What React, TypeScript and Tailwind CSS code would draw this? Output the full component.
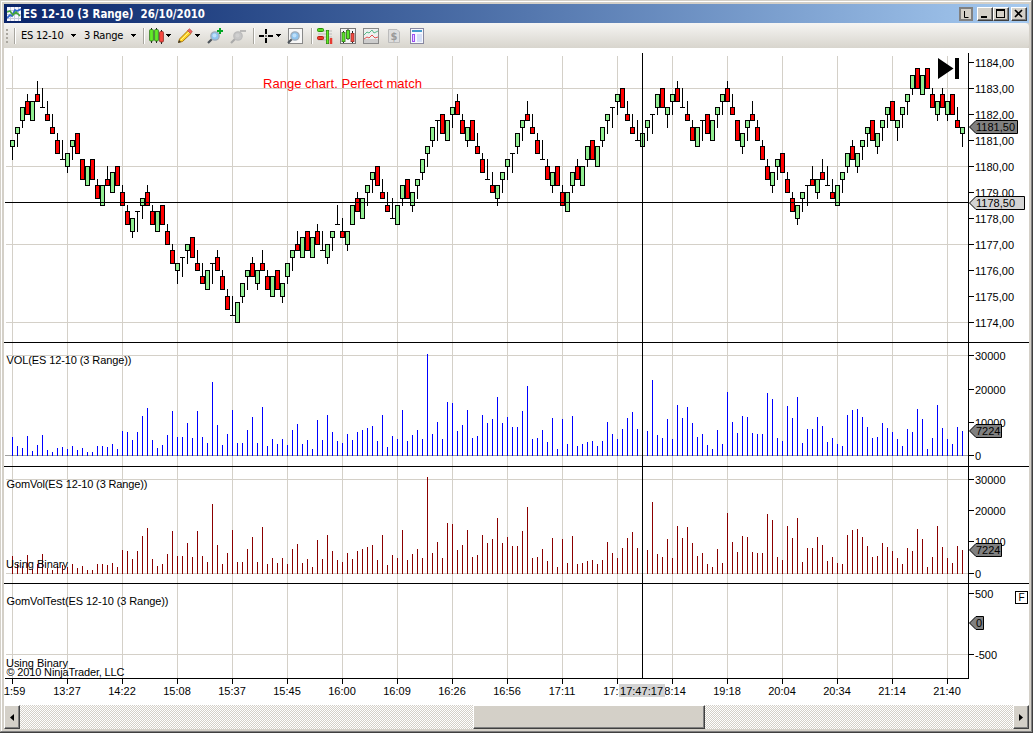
import React from "react";

// Each entry is direction + closing tick + body size in ticks; every bar spans three ticks.
const BARS = `U28,1 U30,1 U33,2 D32,2 U34,3 D34,1 D33,0 D31,1 D29,1 D26,2
D25,0 U26,2 U28,1 D26,3 D22,3 U24,3 D22,3 D19,2 U21,3 D21,1
U23,3 D21,3 D18,2 D15,2 U16,2 U17,0 U19,1 D18,2 D15,2 U17,3
D15,3 D12,2 D9,2 U9,1 U10,0 U12,1 D10,3 D8,1 D6,1 U8,3
U9,0 D8,2 D5,2 D2,2 D1,0 U3,3 U6,2 U8,1 D7,2 U8,2
D8,1 D5,2 U7,3 D5,3 U6,2 U9,2 U11,1 D11,1 U13,3 D11,3
U13,3 D12,2 D11,0 U12,2 U14,1 D15,0 D13,1 U14,2 U18,3 D17,2
U19,3 U21,1 U23,1 D21,3 D19,1 D17,1 D16,0 U18,3 U21,2 D19,3
U20,2 U22,1 U25,2 U27,1 U30,2 U31,0 D29,3 U31,3 U33,1 D32,2
D29,2 U30,2 D28,3 D26,1 D23,2 D22,0 D20,1 U21,2 U23,1 U25,1
U26,0 U29,2 U31,1 D31,1 D29,1 D26,2 D25,0 D22,2 U23,2 D21,3
D18,2 U20,3 U23,2 D22,2 U24,3 U27,2 D25,3 U27,3 U30,2 U32,1
U33,0 U35,1 D33,3 D31,1 D29,1 D28,0 U29,2 U31,1 U32,0 U35,2
D33,3 U33,1 U35,1 D34,2 D33,0 D31,1 D28,2 U30,3 U31,0 D29,3
U31,3 U33,1 U35,1 D34,2 D32,1 D28,3 U29,2 U31,1 D31,1 D28,2
D25,2 D22,2 U23,2 U25,1 D23,3 D20,2 D17,2 U18,2 U20,1 U21,0
D21,1 U22,2 D22,1 D21,0 D19,1 U21,3 U23,1 U26,2 D25,2 U26,2
U28,1 U30,1 D28,3 U29,2 U31,1 U33,1 D31,3 U31,1 U33,1 U35,1
U38,2 D36,3 U38,3 D36,3 D33,2 U34,2 D33,2 U34,2 D32,3 D30,1
U30,1`.split(/\s+/);

const VOLUME = [
  19, 10, 8, 20, 5, 11, 21, 6, 4, 8, 9, 7, 10, 6, 8, 4, 4, 10, 10, 9,
  12, 7, 25, 24, 16, 24, 40, 48, 16, 8, 11, 21, 45, 19, 19, 33, 18, 45, 19, 13,
  74, 31, 11, 22, 46, 13, 13, 26, 39, 13, 49, 10, 17, 12, 17, 11, 26, 32, 12, 16,
  7, 36, 16, 41, 24, 15, 13, 22, 16, 24, 26, 28, 30, 15, 41, 9, 20, 17, 46, 15,
  21, 26, 17, 102, 22, 34, 17, 54, 53, 25, 31, 46, 18, 20, 41, 33, 37, 59, 33, 39,
  29, 29, 45, 70, 17, 18, 26, 14, 38, 7, 37, 12, 40, 10, 12, 14, 15, 10, 15, 34,
  22, 17, 27, 38, 44, 27, 20, 25, 76, 21, 18, 37, 17, 51, 38, 49, 33, 19, 22, 11,
  7, 26, 12, 64, 34, 23, 40, 39, 23, 22, 22, 63, 57, 18, 15, 50, 38, 59, 13, 27,
  27, 39, 30, 14, 18, 12, 10, 41, 46, 47, 39, 29, 18, 19, 33, 28, 24, 17, 10, 27,
  24, 47, 37, 7, 18, 51, 28, 17, 12, 29, 25,
];

const TIMES = ["11:59", "13:27", "14:22", "15:08", "15:37", "15:45", "16:00", "16:09", "16:26", "16:56", "17:11", "17:31", "18:14", "19:18", "20:04", "20:34", "21:14", "21:40"];
const PRICES = [1184, 1183, 1182, 1181, 1180, 1179, 1178, 1177, 1176, 1175, 1174];

const barX = (i: number) => 12 + 5 * i;
const tickY = (t: number) => Math.floor(322 - 6.5 * t);

function Candle({ code, i }: { code: string; i: number }) {
  const up = code[0] === "U";
  const [close, size] = code.slice(1).split(",").map(Number);
  const high = up ? close : close + 3;
  const open = up ? close - size : close + size;
  const top = tickY(Math.max(open, close));
  const bottom = tickY(Math.min(open, close));
  const x = barX(i);
  const wickTop = tickY(high);
  return (
    <g>
      <rect x={x} y={wickTop} width={1} height={tickY(high - 3) - wickTop + 1} />
      <rect x={x - 2} y={top} width={5} height={bottom - top + 1} />
      {size > 0 && <rect x={x - 1} y={top + 1} width={3} height={bottom - top - 1} fill={up ? "#90ee90" : "#ff0000"} />}
    </g>
  );
}

function AxisTick({ y, label, width }: { y: number; label: string; width?: number }) {
  return (
    <g>
      <rect x={968} y={y} width={6} height={1} />
      <text x={975} y={y + 5} textLength={width}>{label}</text>
    </g>
  );
}

function Tag({ y, right, fill, label, width }: { y: number; right: number; fill: string; label: string; width?: number }) {
  return (
    <g>
      <path d={`M969.5 ${y + 7}L976 ${y + 0.5}H${right - 0.5}V${y + 13.5}H976Z`} fill={fill} stroke="#000" />
      <text x={976} y={y + 11} textLength={width}>{label}</text>
    </g>
  );
}

function Chart() {
  return (
    <svg className="block h-[657px] w-[1025px] shrink-0 bg-white font-['Liberation_Sans',Arial,sans-serif] text-[11px]" viewBox="4 48 1025 657">
      <g shapeRendering="crispEdges">
        <g fill="#d4d0c8">
          {TIMES.map((t, i) => <rect key={t} x={12 + 55 * i} y={56} width={1} height={622} />)}
          {[88, 166, 244, 322, 355, 479, 573, 654].map((y) => <rect key={y} x={6} y={y} width={962} height={1} />)}
        </g>
        <rect x={5} y={455} width={963} height={1} fill="#a0a0a0" />
        {VOLUME.map((h, i) => <rect key={i} x={barX(i)} y={456 - h} width={1} height={h} fill="#0000ff" />)}
        {VOLUME.map((v, i) => {
          const h = Math.round(v * 0.95);
          return <rect key={i} x={barX(i)} y={574 - h} width={1} height={h} fill="#8b0000" />;
        })}
        {BARS.map((code, i) => <Candle key={i} code={code} i={i} />)}
        <rect x={4} y={342} width={1025} height={1} />
        <rect x={4} y={466} width={1025} height={1} />
        <rect x={4} y={583} width={1025} height={1} />
        <rect x={5} y={678} width={964} height={1} />
        <rect x={968} y={53} width={1} height={626} />
        <rect x={5} y={202} width={964} height={1} />
        <rect x={642} y={53} width={1} height={626} />
        {TIMES.map((t, i) => <rect key={t} x={12 + 55 * i} y={678} width={1} height={6} />)}
      </g>
      {PRICES.map((p) => <AxisTick key={p} y={62 + (1184 - p) * 26} label={`${p},00`} width={39} />)}
      <AxisTick y={355} label="30000" />
      <AxisTick y={389} label="20000" />
      <AxisTick y={422} label="10000" />
      <AxisTick y={455} label="0" />
      <AxisTick y={479} label="30000" />
      <AxisTick y={510} label="20000" />
      <AxisTick y={541} label="10000" />
      <AxisTick y={573} label="0" />
      <AxisTick y={593} label="500" />
      <AxisTick y={654} label="-500" />
      <Tag y={120} right={1018} fill="#808080" label="1181,50" width={39} />
      <Tag y={196} right={1025} fill="#d3d3d3" label="1178,50" width={39} />
      <Tag y={424} right={1002} fill="#808080" label="7224" />
      <Tag y={543} right={1002} fill="#808080" label="7224" />
      <Tag y={616} right={984} fill="#808080" label="0" />
      {TIMES.map((t, i) => <text key={t} x={12 + 55 * i} y={695} textAnchor="middle">{t}</text>)}
      <rect x={619} y={684} width={46} height={13} fill="#d3d3d3" />
      <text x={620} y={695} textLength={43}>17:47:17</text>
      <text x={263} y={88} className="text-[13px]" fill="#ff0000" textLength={159}>Range chart. Perfect match</text>
      <text x={6.5} y={364} textLength={125}>VOL(ES 12-10 (3 Range))</text>
      <text x={6.5} y={488} textLength={141}>GomVol(ES 12-10 (3 Range))</text>
      <text x={6} y={568} textLength={62}>Using Binary</text>
      <text x={6.5} y={605} textLength={162}>GomVolTest(ES 12-10 (3 Range))</text>
      <text x={6} y={667} textLength={62}>Using Binary</text>
      <text x={6.5} y={676} textLength={118}>© 2010 NinjaTrader, LLC</text>
      <path d="M938 58L953.5 68.5L938 79Z M955 58H959V79H955Z" />
      <rect x={1015.5} y={591.5} width={12} height={12} fill="#fff" stroke="#000" />
      <text x={1018.5} y={601} className="text-[10px]">F</text>
    </svg>
  );
}

const Sep = ({ className }: { className: string }) => <div className={`h-4 w-0.5 shrink-0 border-r border-white bg-[#a8a69f] ${className}`} />;

const Arrow = ({ className }: { className: string }) => (
  <svg className={`h-[3px] w-[5px] shrink-0 ${className}`} viewBox="0 0 5 3" shapeRendering="crispEdges">
    <path d="M0 0H5V1H4V2H3V3H2V2H1V1H0Z" />
  </svg>
);

const Icon = ({ className, children }: { className: string; children: React.ReactNode }) => (
  <svg className={`size-4 shrink-0 ${className}`} viewBox="0 0 16 16">{children}</svg>
);

const Lens = ({ gray }: { gray?: boolean }) => (
  <g>
    <path d="M1 15L5 11" stroke={gray ? "#aaa" : "#4c535a"} strokeWidth="2.2" />
    <circle cx="8" cy="8" r="4.2" fill={gray ? "#c6c6c6" : "#8fc4ee"} stroke={gray ? "#bcbcbc" : "#a0acb8"} strokeWidth="1.3" />
    <circle cx="7.5" cy="7.5" r="2" fill={gray ? "#d0d0d0" : "#bfe0fa"} />
  </g>
);

function Toolbar() {
  return (
    <div className="flex h-[25px] shrink-0 items-center overflow-hidden rounded-r-sm bg-linear-to-b from-[#f6f5f3] to-[#d8d5cd] font-['DejaVu_Sans_Condensed','DejaVu_Sans',sans-serif] text-[11px] tracking-[-0.25px] text-black">
      <div className="ml-[2px] flex flex-col gap-[2px]">
        {[0, 1, 2, 3].map((n) => <div key={n} className="size-[2px] bg-[#aaa79f]" />)}
      </div>
      <Sep className="ml-[6px]" />
      <div className="ml-[5px] w-[50px] pt-[2px] whitespace-nowrap">ES 12-10</div>
      <Arrow className="" />
      <div className="ml-[8px] w-[47px] pt-[2px] whitespace-nowrap">3 Range</div>
      <Arrow className="" />
      <Sep className="ml-[7px]" />
      <Icon className="ml-[4px]">
        <path d="M2.5 0V15M7.5 0V15M12.5 2V16" stroke="#222" />
        <g strokeWidth=".8">
          <rect x=".6" y="1.5" width="3.8" height="11.5" rx="1" fill="#62ec28" stroke="#2b6d16" />
          <rect x="5.6" y="1.5" width="3.8" height="11.5" rx="1" fill="#62ec28" stroke="#2b6d16" />
          <rect x="10.6" y="3.5" width="3.8" height="10.5" rx="1" fill="#fa4a42" stroke="#8a2620" />
        </g>
      </Icon>
      <Arrow className="ml-[1px]" />
      <Icon className="ml-[6px]">
        <path d="M1.5 14.5L2.5 11L11 2.5L14 5.5L5.5 13.5Z" fill="#ffd326" stroke="#a87510" />
        <path d="M4 12L12 4" stroke="#fff390" />
        <path d="M10.5 2.5L12.5 .8L15.3 3.5L13.5 5.5Z" fill="#ee6662" stroke="#b94845" strokeWidth=".7" />
        <path d="M1 15L2 12L4 14Z" fill="#333" />
      </Icon>
      <Arrow className="ml-[2px]" />
      <Icon className="ml-[7px]"><Lens /><path d="M13 0V6M10 3H16" stroke="#00a723" strokeWidth="2" /></Icon>
      <Icon className="ml-[7px]"><Lens gray /><path d="M10 3H16" stroke="#aaa" strokeWidth="1.5" /></Icon>
      <Sep className="ml-[7px]" />
      <Icon className="ml-[4px]"><path d="M0 8H5M9 8H14M7 1V6M7 10V15" stroke="#000" strokeWidth="2" /><path d="M6 8H8" stroke="#000" /></Icon>
      <Arrow className="ml-[1px]" />
      <Icon className="ml-[6px]"><rect x="1.5" y=".5" width="14" height="15" fill="#f7f7f7" stroke="#888" /><Lens /></Icon>
      <Sep className="ml-[8px]" />
      <Icon className="ml-[4px]">
        <path d="M1 3H15M1 6H15M1 9H15M1 12H15" stroke="#bbb" />
        <rect x=".5" y=".5" width="6" height="3" rx="1" fill="#55db20" stroke="#279009" />
        <rect x=".5" y="8.5" width="6" height="3" rx="1" fill="#ec3a2c" stroke="#b51c10" />
        <path d="M10.5 2V16" stroke="#2c6f18" strokeWidth="3" /><path d="M10.5 2.5V15.5" stroke="#62ec28" strokeWidth="1.8" />
        <path d="M14 10V16" stroke="#e53b32" strokeWidth="2.5" />
      </Icon>
      <Icon className="ml-[7px]">
        <rect x=".5" y=".5" width="15" height="15" fill="#f5f5f5" stroke="#777" />
        <path d="M3.5 3V15M8 1V12M12.5 3V15" stroke="#222" />
        <path d="M3.5 4V14M8 2V11" stroke="#285c18" strokeWidth="3.8" /><path d="M3.5 4.5V13.5M8 2.5V10.5" stroke="#5be428" strokeWidth="2.4" />
        <path d="M12.5 5V14" stroke="#7c2822" strokeWidth="3.8" /><path d="M12.5 5.5V13.5" stroke="#f44a42" strokeWidth="2.4" />
      </Icon>
      <Icon className="ml-[7px]">
        <rect x=".5" y=".5" width="15" height="15" fill="#edf0f0" stroke="#888" /><path d="M1 13H15" stroke="#ccc" strokeWidth="4" />
        <path d="M1 7L4 4L6 5L9 2L11 5L15 3" fill="none" stroke="#58b889" /><path d="M1 11L4 9L6 10L9 7L12 10L15 9" fill="none" stroke="#e65353" />
      </Icon>
      <Icon className="ml-[8px]">
        <path d="M1.5 1.5H10L12.5 4V14.5H1.5Z" fill="#ddd" stroke="#bbb" />
        <text x="3.6" y="12" fontSize="11" fontWeight="bold" fill="#999">$</text>
      </Icon>
      <Icon className="ml-[6px]">
        <rect x="1.5" y=".5" width="13" height="15" fill="#f7f8ff" stroke="#8888a0" />
        <path d="M3 3H13" stroke="#449acb" strokeWidth="2" /><rect x="3.5" y="6.5" width="2" height="7" fill="#e8d9ff" stroke="#9b50f1" />
        <path d="M8 7H13M8 9H13M8 11H13M8 13H13" stroke="#b5c7ef" />
      </Icon>
    </div>
  );
}

const BEVEL = "shrink-0 border border-t-white border-l-white border-r-[#404040] border-b-[#404040] bg-[#d4d0c8] shadow-[inset_-1px_-1px_#808080]";

function TitleBar() {
  return (
    <div className="flex h-[19px] shrink-0 items-center bg-linear-to-r from-[#0a246a] to-[#a6caf0]">
      <svg className="ml-[3px] size-[14px] shrink-0" viewBox="0 0 14 14">
        <rect width="14" height="14" fill="#f7f7ff" />
        <path d="M3.5 0V14M7.5 0V14M11.5 0V14M0 3.5H14M0 7.5H14M0 11.5H14" stroke="#c5c9dc" />
        <path d="M0 11L3 8L5 9L8 3L10 4L14 2" fill="none" stroke="#3068ce" strokeWidth="1.8" />
        <path d="M0 5L3 4L6 8L9 5L13 9" fill="none" stroke="#42a43b" strokeWidth="1.6" />
      </svg>
      <svg className="ml-[2px] h-[18px] w-[184px] shrink-0 font-['DejaVu_Sans_Condensed','DejaVu_Sans',sans-serif] text-[12px] font-bold" viewBox="0 0 184 18">
        <text x="0" y="13" fill="#fff" textLength="182" lengthAdjust="spacingAndGlyphs" xmlSpace="preserve">{"ES 12-10 (3 Range)\u00a0 26/10/2010"}</text>
      </svg>
      <div className="ml-auto flex h-[14px] pr-[2px]">
        <svg className="mr-[4px] h-[14px] w-[14px]" viewBox="0 0 14 14"><rect x="1" y="1" width="12" height="12" fill="#d4d0c8" stroke="#808080" strokeWidth="2" /><path d="M5.5 4V10.5H9.5" fill="none" stroke="#000" /></svg>
        <div className={`h-[14px] w-4 ${BEVEL}`}><svg className="h-3 w-3.5" viewBox="0 0 14 12"><rect x="3" y="8" width="6" height="2" /></svg></div>
        <div className={`mr-[2px] h-[14px] w-4 ${BEVEL}`}><svg className="h-3 w-3.5" viewBox="0 0 14 12" shapeRendering="crispEdges"><path d="M2 1H11V10H2ZM3 3V9H10V3Z" fillRule="evenodd" /></svg></div>
        <div className={`h-[14px] w-4 ${BEVEL}`}><svg className="h-3 w-3.5" viewBox="0 0 14 12"><path d="M3 2L10 9M10 2L3 9" stroke="#000" strokeWidth="1.6" /></svg></div>
      </div>
    </div>
  );
}

function ScrollBar() {
  return (
    <div className="flex h-6 shrink-0 bg-[conic-gradient(#ffffff_25%,#d4d0c8_0_50%,#ffffff_0_75%,#d4d0c8_0)] bg-[length:2px_2px]">
      <div className={`flex w-4 items-center justify-center ${BEVEL}`}><svg className="h-[7px] w-1" viewBox="0 0 4 7"><path d="M4 0V7L0 3.5Z" /></svg></div>
      <div className={`ml-[453px] w-[232px] ${BEVEL}`} />
      <div className={`ml-auto flex w-4 items-center justify-center ${BEVEL}`}><svg className="h-[7px] w-1" viewBox="0 0 4 7"><path d="M0 0V7L4 3.5Z" /></svg></div>
    </div>
  );
}

export default function App() {
  return (
    <div className="h-[733px] w-[1033px] overflow-hidden border-r border-b border-[#404040] bg-[#d4d0c8]">
      <div className="h-full border-t border-r border-b border-l border-t-[#d4d0c8] border-r-[#808080] border-b-[#808080] border-l-[#d4d0c8]">
        <div className="flex h-full flex-col border-t border-l border-white pt-[2px] pr-[2px] pl-[2px]">
          <TitleBar />
          <Toolbar />
          <Chart />
          <ScrollBar />
        </div>
      </div>
    </div>
  );
}
